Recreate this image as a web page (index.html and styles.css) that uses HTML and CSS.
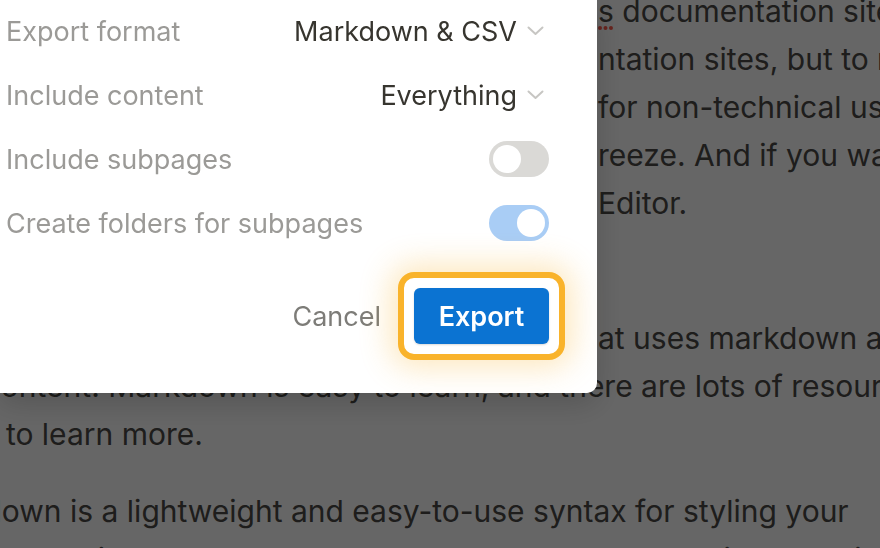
FILE: index.html
```html
<!DOCTYPE html>
<html lang="en">
  <head>
    <meta charset="UTF-8" />
    <meta name="viewport" content="width=device-width, initial-scale=1.0" />
    <title>Export</title>
    <link rel="stylesheet" href="styles.css">
  </head>
  <body>
    <main class="page">
      <p class="para first">
        <span class="line cut"><span class="typo">s</span> documentation sites for developers</span>
        <span class="line cut">ntation sites, but to make things easier</span>
        <span class="line cut">for non-technical users, publishing is a</span>
        <span class="line cut">reeze. And if you want to write visually, try</span>
        <span class="line cut">Editor.</span>
      </p>
      <p class="para second">
        <span class="line cut">at uses markdown and MDX for</span>
        <span class="line">your content. Markdown is easy to learn, and there are lots of resources</span>
        <span class="line">online to learn more.</span>
      </p>
      <p class="para">
        <span class="line">Markdown is a lightweight and easy-to-use syntax for styling your</span>
        <span class="line">content, and it works almost everywhere on the web and in text editors.</span>
      </p>
    </main>

    <div class="overlay"></div>

    <div class="dialog">
      <div class="option">
        <span class="label">Export format</span>
        <span class="select">
          Markdown &amp; CSV
          <svg class="chevron" width="17" height="10" viewBox="0 0 17 10"><path d="M1.5 1.5l7 6.5 7-6.5" /></svg>
        </span>
      </div>
      <div class="option">
        <span class="label">Include content</span>
        <span class="select">
          Everything
          <svg class="chevron" width="17" height="10" viewBox="0 0 17 10"><path d="M1.5 1.5l7 6.5 7-6.5" /></svg>
        </span>
      </div>
      <div class="option">
        <span class="label">Include subpages</span>
        <span class="toggle"><span class="knob"></span></span>
      </div>
      <div class="option">
        <span class="label">Create folders for subpages</span>
        <span class="toggle on"><span class="knob"></span></span>
      </div>

      <div class="actions">
        <button class="cancel">Cancel</button>
        <span class="focus-ring"><button class="export">Export</button></span>
      </div>
    </div>
  </body>
</html>
```

FILE: styles.css
```css
body {
  margin: 0;
  background: #ffffff;
  font-family: Inter, "Noto Sans", sans-serif;
  overflow: hidden;
  height: 548px;
}
.page {
  margin-left: -88px;
  font-size: 30px;
  line-height: 48px;
  color: #4b4a46;
}
.para {
  margin: 29px 0 0;
}
.para.first {
  margin-top: -13px;
}
.para.second {
  margin-top: 87px;
}
.line {
  display: block;
  white-space: nowrap;
}
.line.cut {
  padding-left: 686px;
}
.typo {
  text-decoration: underline dotted #ff5a4a;
  text-decoration-thickness: 4px;
  text-underline-offset: 4px;
}
.overlay {
  position: fixed;
  inset: 0;
  background: rgba(0, 0, 0, 0.6);
}
.dialog {
  position: fixed;
  top: -1px;
  left: 0;
  width: 597px;
  background: white;
  border-radius: 0 0 10px 0;
  box-shadow: 0 10px 30px rgba(0, 0, 0, 0.18);
}
.option {
  display: flex;
  align-items: center;
  justify-content: space-between;
  height: 64px;
  padding: 0 48px 0 6px;
  font-size: 27px;
}
.label {
  color: #9b9a97;
}
.select {
  display: flex;
  align-items: center;
  gap: 10px;
  margin-right: 5px;
  color: #37352f;
}
.chevron path {
  fill: none;
  stroke: #c7c6c3;
  stroke-width: 2;
  stroke-linecap: round;
  stroke-linejoin: round;
}
.toggle {
  display: flex;
  width: 60px;
  height: 36px;
  padding: 4px;
  box-sizing: border-box;
  border-radius: 18px;
  background: #dad9d6;
}
.toggle.on {
  background: #a9cdf5;
  justify-content: flex-end;
}
.knob {
  width: 28px;
  height: 28px;
  border-radius: 50%;
  background: white;
}
.actions {
  display: flex;
  align-items: center;
  justify-content: flex-end;
  gap: 17px;
  padding: 17px 32px 33px 0;
}
.cancel {
  border: none;
  background: none;
  padding: 0;
  font-family: inherit;
  font-size: 27px;
  color: #7d7c78;
}
.focus-ring {
  display: flex;
  padding: 10px;
  border: 6px solid #f9b32b;
  border-radius: 16px;
  background: white;
  box-shadow: 0 0 30px 8px rgba(250, 180, 45, 0.3);
}
.export {
  width: 135px;
  height: 56px;
  border: none;
  border-radius: 6px;
  background: #0b73d2;
  color: white;
  font-family: inherit;
  font-size: 27px;
  font-weight: 600;
  box-shadow: 0 1px 2px rgba(0, 0, 0, 0.15);
}
```
